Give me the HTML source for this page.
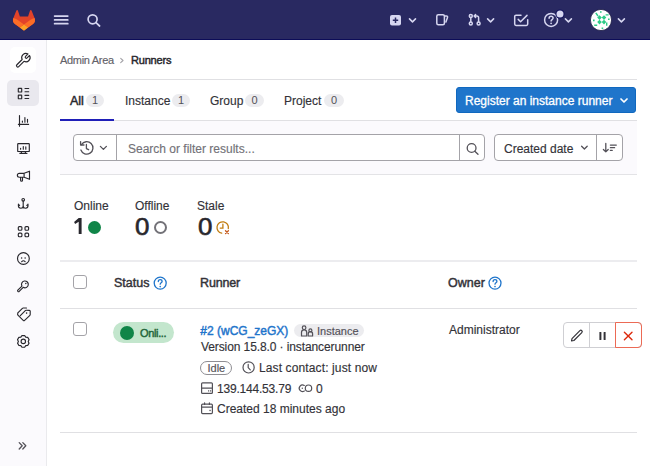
<!DOCTYPE html>
<html><head><meta charset="utf-8">
<style>
*{box-sizing:border-box;margin:0;padding:0}
html,body{width:650px;height:466px;overflow:hidden;background:#fff;font-family:"Liberation Sans",sans-serif;color:#333238}
.a{position:absolute}
.t{position:absolute;white-space:nowrap;font-size:12px;line-height:14px;-webkit-text-stroke:0.15px currentColor}
svg{display:block}
#hdr{left:0;top:0;width:650px;height:40px;background:#292961;border-bottom:1px solid #0c0c58}
#side{left:0;top:40px;width:47px;height:426px;background:#fbfafd;border-right:1px solid #eaeaed}
.sic{position:absolute;left:17px;width:13px;height:13px}
.line{position:absolute;height:1px;background:#e0e0e3}
.badge{position:absolute;height:13px;border-radius:7px;background:#ececef;color:#535158;font-size:11px;line-height:13px;text-align:center}
</style></head><body>

<!-- HEADER -->
<div id="hdr" class="a">
  <svg class="a" style="left:0;top:0" width="650" height="40" viewBox="0 0 650 40">
   <g transform="translate(13 10) scale(0.88 0.85)">
    <path fill="#E24329" d="m24.507 9.5-.034-.09L21.082.562a.896.896 0 0 0-1.694.091l-2.29 7.01H7.825L5.535.653a.898.898 0 0 0-1.694-.09L.451 9.411.416 9.5a6.297 6.297 0 0 0 2.09 7.278l.012.01.03.022 5.16 3.867 2.56 1.935 1.554 1.176a1.051 1.051 0 0 0 1.268 0l1.555-1.176 2.56-1.935 5.197-3.89.014-.01A6.297 6.297 0 0 0 24.507 9.5Z"/>
    <path fill="#FC6D26" d="m24.507 9.5-.034-.09a11.44 11.440 0 0 0-4.560 2.051l-7.447 5.632 4.742 3.584 5.197-3.890.014-.010A6.297 6.297 0 0 0 24.507 9.5Z"/>
    <path fill="#FCA326" d="m7.707 20.677 2.560 1.935 1.555 1.176a1.051 1.051 0 0 0 1.268 0l1.555-1.176 2.560-1.935-4.743-3.584-4.755 3.584Z"/>
    <path fill="#FC6D26" d="M5.010 11.461a11.430 11.430 0 0 0-4.560-2.050L.416 9.500a6.297 6.297 0 0 0 2.090 7.278l.012.010.030.022 5.160 3.867 4.745-3.584-7.444-5.632Z"/>
   </g>
   <g fill="none" stroke="#d6d6f0" stroke-width="1.5" stroke-linecap="round" stroke-linejoin="round">
    <!-- hamburger -->
    <path d="M54.6 16.1h13.2M54.6 19.9h13.2M54.6 23.7h13.2" stroke-width="1.7"/>
    <!-- search -->
    <circle cx="92.6" cy="19.3" r="4.5" stroke-width="1.7"/>
    <path d="M96 22.7l3.6 3.3" stroke-width="1.7"/>
    <!-- chevrons -->
    <path d="M409.5 18.9l3 3 3-3M487.6 18.9l3 3 3-3M565.4 18.9l3 3 3-3M618.4 18.9l3 3 3-3"/>
    <!-- mug -->
    <rect x="436.8" y="14.8" width="7.6" height="9.9" rx="1.5"/>
    <path d="M444.6 16h1.9c.8 0 1.3.7 1 1.4l-1.6 4.6"/>
    <!-- MR -->
    <circle cx="470.8" cy="15.9" r="1.5"/>
    <circle cx="470.8" cy="23.6" r="1.5"/>
    <circle cx="478.6" cy="23.6" r="1.5"/>
    <path d="M470.8 17.4v4.7M478.6 22.1v-4.3c0-1-.7-1.8-1.7-1.8h-2.6M475.6 14.5l-1.5 1.5 1.5 1.5"/>
    <!-- todo -->
    <path d="M521 15.2h-5a1.3 1.3 0 0 0-1.3 1.3v7.6a1.3 1.3 0 0 0 1.3 1.3h10.4a1.3 1.3 0 0 0 1.3-1.3v-4.4"/>
    <path d="M518.2 19.4l2.4 2.4 6.4-6.4"/>
    <!-- help -->
    <circle cx="551.1" cy="19.9" r="6.5"/>
    <path d="M549.1 18.2c0-1.1.9-2 2-2s2 .9 2 1.9c0 1.4-2 1.6-2 2.9"/>
   </g>
   <g fill="#d6d6f0">
    <rect x="390" y="15" width="11" height="10.6" rx="2"/>
    <circle cx="551.1" cy="23.3" r=".9"/>
    <circle cx="560" cy="14" r="4.6" fill="#12125c"/>
    <circle cx="560" cy="14" r="3.5"/>
   </g>
   <path d="M395.5 17.6v5.4M392.8 20.3h5.4" stroke="#292961" stroke-width="1.5"/>
  </svg>
  <!-- avatar -->
  <svg class="a" style="left:590px;top:9px" width="22" height="22" viewBox="0 0 22 22">
    <circle cx="11" cy="11" r="10.6" fill="#fff" stroke="#1d1d45" stroke-width="0.8"/>
    <g fill="#2ecc87">
      <path d="M9.5 6.3l2.3 2.3-2.3 2.3-2.3-2.3zM14 6.3l2.3 2.3L14 10.9l-2.3-2.3zM9.5 10.8l2.3 2.3-2.3 2.3-2.3-2.3zM14 10.8l2.3 2.3-2.3 2.3-2.3-2.3z"/>
      <path d="M10 2.2h1.6v1.6H10zM5.2 4.2l1.2-.8 2.2 3.2-1.2.8zM15.6 5.2h3v1.4h-3zM3 10.6h1.6v1.6H3zM18 9.4h1.6v1.6H18zM4.2 15.6h3v1.4h-3zM16 13.6h1.4v3.2H16zM11.6 18.4h1.6v1.6h-1.6z"/>
    </g>
  </svg>
</div>

<!-- SIDEBAR -->
<div id="side" class="a">
  <div class="a" style="left:10px;top:7px;width:26px;height:26px;background:#fff;border-radius:5px"></div>
  <div class="a" style="left:7px;top:40px;width:32px;height:26px;background:#e9e8ee;border-radius:5px"></div>
</div>

<!-- BREADCRUMB -->
<div class="t" style="left:60px;top:54px;font-size:11px;line-height:13px;color:#626168;letter-spacing:-0.3px">Admin Area</div>
<svg class="a" style="left:120px;top:57px" width="5" height="7" viewBox="0 0 5 7"><path d="M0.7 1.3l2.3 2.2-2.3 2.2" fill="none" stroke="#a4a3a8" stroke-width="1.1" stroke-linecap="round" stroke-linejoin="round"/></svg>
<div class="t" style="left:131px;top:54px;font-size:11px;line-height:13px;color:#28272d;letter-spacing:-0.2px;-webkit-text-stroke:0.45px #28272d">Runners</div>
<div class="line" style="left:60px;top:79px;width:577px"></div>

<!-- TABS -->
<div class="t" style="left:70px;top:93.6px;font-size:12.5px;color:#28272d;-webkit-text-stroke:0.45px #28272d">All</div>
<div class="badge" style="left:86px;top:94px;width:18px">1</div>
<div class="t" style="left:125px;top:94px">Instance</div>
<div class="badge" style="left:172px;top:94px;width:18px">1</div>
<div class="t" style="left:210px;top:94px">Group</div>
<div class="badge" style="left:245px;top:94px;width:19px">0</div>
<div class="t" style="left:284px;top:94px">Project</div>
<div class="badge" style="left:324px;top:94px;width:20px">0</div>
<div class="line" style="left:60px;top:120px;width:577px"></div>
<div class="a" style="left:60px;top:119px;width:54px;height:2px;background:#1f1fb8"></div>

<!-- Register button -->
<div class="a" style="left:456px;top:87px;width:180px;height:26px;background:#1f75cb;border:1px solid #1068bf;border-radius:3px"></div>
<div class="t" style="left:465px;top:94px;color:#fff;-webkit-text-stroke:0.3px #fff">Register an instance runner</div>
<svg class="a" style="left:620px;top:98px" width="8" height="5" viewBox="0 0 8 5"><path d="M1 1l3 3 3-3" fill="none" stroke="#fff" stroke-width="1.7" stroke-linecap="round" stroke-linejoin="round"/></svg>

<!-- FILTER BAR -->
<div class="a" style="left:60px;top:121px;width:577px;height:54px;background:#fbfafd;border-bottom:1px solid #e3e3e6"></div>
<div class="a" style="left:73px;top:134px;width:412px;height:27px;background:#fff;border:1px solid #a4a3a8;border-radius:4px"></div>
<div class="a" style="left:116px;top:134px;width:1px;height:27px;background:#a4a3a8"></div>
<div class="a" style="left:459px;top:134px;width:1px;height:27px;background:#a4a3a8"></div>
<div class="t" style="left:128px;top:142px;color:#737278">Search or filter results...</div>
<div class="a" style="left:494px;top:134px;width:129px;height:27px;background:#fff;border:1px solid #a4a3a8;border-radius:4px"></div>
<div class="a" style="left:596px;top:134px;width:1px;height:27px;background:#a4a3a8"></div>
<div class="t" style="left:504px;top:142px">Created date</div>

<!-- STATS -->
<div class="t" style="left:74px;top:199px">Online</div>
<div class="t" style="left:135px;top:199px">Offline</div>
<div class="t" style="left:197px;top:199px">Stale</div>
<svg class="a" style="left:70px;top:214px" width="16" height="24" viewBox="70 214 16 24"><path d="M78.7 218.1h2.9v15.9h-2.9v-12.3l-3.6 2.4-1-2.1z" fill="#28272d"/></svg>
<div class="t" style="left:134.7px;top:213px;font-size:24px;line-height:27px;-webkit-text-stroke:0.6px #28272d;color:#28272d;transform:scaleX(1.08);transform-origin:0 0">0</div>
<div class="t" style="left:197.7px;top:213px;font-size:24px;line-height:27px;-webkit-text-stroke:0.6px #28272d;color:#28272d;transform:scaleX(1.08);transform-origin:0 0">0</div>
<div class="a" style="left:88px;top:221px;width:13px;height:13px;border-radius:50%;background:#108548"></div>
<div class="a" style="left:154px;top:221px;width:13px;height:13px;border-radius:50%;border:2px solid #737278"></div>

<!-- TABLE -->
<div class="line" style="left:60px;top:260px;width:577px;height:2px;background:#ececef"></div>
<div class="a" style="left:73px;top:275px;width:14px;height:14px;border:1px solid #a4a3a8;border-radius:3px;background:#fff"></div>
<div class="t" style="left:114px;top:275.5px;font-size:12.5px;-webkit-text-stroke:0.45px #333238">Status</div>
<div class="t" style="left:200px;top:275.5px;font-size:12.5px;letter-spacing:-0.15px;-webkit-text-stroke:0.45px #333238">Runner</div>
<div class="t" style="left:448px;top:275.5px;font-size:12.5px;-webkit-text-stroke:0.45px #333238">Owner</div>
<div class="line" style="left:60px;top:308px;width:577px"></div>

<div class="a" style="left:73px;top:322px;width:14px;height:14px;border:1px solid #a4a3a8;border-radius:3px;background:#fff"></div>
<div class="a" style="left:113px;top:322px;width:61px;height:21px;border-radius:11px;background:#c3e6cd"></div>
<div class="a" style="left:120px;top:326px;width:14px;height:14px;border-radius:50%;background:#108548"></div>
<div class="t" style="left:140px;top:326.5px;font-size:11px;line-height:13px;color:#24663b;letter-spacing:-0.35px;-webkit-text-stroke:0.45px #24663b">Onli...</div>

<div class="t" style="left:200.3px;top:324px;color:#1f75cb;-webkit-text-stroke:0.45px #1f75cb">#2 (wCG_zeGX)</div>
<div class="badge" style="left:294px;top:324px;width:70px"></div>
<div class="t" style="left:317px;top:325px;font-size:11px;line-height:13px;color:#535158">Instance</div>
<div class="t" style="left:201px;top:340px;letter-spacing:-0.1px">Version 15.8.0 · instancerunner</div>
<div class="a" style="left:200px;top:361px;width:32px;height:14px;border:1px solid #8f8e93;border-radius:7px"></div>
<div class="t" style="left:207.5px;top:361.8px;font-size:11px;line-height:13px;color:#535158">Idle</div>
<div class="t" style="left:259px;top:361px;letter-spacing:0.12px">Last contact: just now</div>
<div class="t" style="left:217px;top:382px;letter-spacing:-0.2px">139.144.53.79</div>
<div class="t" style="left:316px;top:382px">0</div>
<div class="t" style="left:217px;top:402px">Created 18 minutes ago</div>

<div class="t" style="left:449px;top:323px">Administrator</div>
<div class="a" style="left:563px;top:322px;width:79px;height:26px;border:1px solid #cfcfd3;border-radius:4px;background:#fff"></div>
<div class="a" style="left:589px;top:322px;width:1px;height:26px;background:#cfcfd3"></div>
<div class="a" style="left:615px;top:322px;width:27px;height:26px;border:1px solid #ec6a55;border-radius:0 4px 4px 0"></div>

<div class="line" style="left:60px;top:432px;width:577px"></div>

<svg class="a" style="left:0;top:0" width="650" height="466" viewBox="0 0 650 466">
 <g fill="none" stroke="#28272d" stroke-width="1.15" stroke-linecap="round" stroke-linejoin="round">
  <!-- wrench -->
  <path d="M27.99 53.96A4.2 4.2 0 0 0 22.16 59.51L16.88 64.78A1.3 1.3 0 0 0 18.72 66.62L23.99 61.34A4.2 4.2 0 0 0 29.54 55.51L27.1 57.96A1.1 1.1 0 0 1 25.54 56.4Z"/>
  <!-- list -->
  <rect x="18.3" y="88.4" width="3.4" height="3.6" rx=".3"/>
  <rect x="18.3" y="95.1" width="3.4" height="3.6" rx=".3"/>
  <path d="M25 88.5h3.7M25 91.7h3.7M25 95.4h3.7M25 98.5h3.7"/>
  <!-- analytics -->
  <path d="M19.5 115.6v10.6M18.4 124.4h10.2M22.4 121.1v1.1M24.9 117.6v4.6M27.5 119.3v2.9"/>
  <!-- monitor -->
  <rect x="17.7" y="143.6" width="11.6" height="7.9" rx=".6"/>
  <path d="M19.8 153.3h7.2M21.4 151.5v1.8M25.4 151.5v1.8M20.6 148.3v.9M23.3 146.6v2.6M25.8 146.9v2.3"/>
  <!-- megaphone -->
  <path d="M24.1 173.3l5.4-2.1v8.1l-5.4-2.1zM24.1 173.3h-4.8a1.95 1.95 0 0 0 0 3.9h4.8M20.6 177.3v3a.95.95 0 0 0 1.9 0v-2.8"/>
  <!-- anchor -->
  <circle cx="23.2" cy="199.8" r="1.3"/>
  <path d="M23.2 201.1v6.9M18.4 204.1v1.7q0 2.4 2.4 2.4t2.4-2.2q0 2.2 2.4 2.2t2.4-2.4v-1.7M18.4 204.3l1.2 1.1M28 204.3l-1.2 1.1"/>
  <!-- grid -->
  <rect x="18.3" y="226.6" width="3.6" height="3.6" rx="1"/>
  <rect x="25" y="226.6" width="3.6" height="3.6" rx="1"/>
  <rect x="18.3" y="233.1" width="3.6" height="3.6" rx="1"/>
  <rect x="25" y="233.1" width="3.6" height="3.6" rx="1"/>
  <!-- face -->
  <circle cx="23.4" cy="258.5" r="5.9"/>
  <path d="M21.7 261.7q1.7-1.9 3.4 0"/>
  <!-- key -->
  <path d="M21.96 286.1A3.4 3.4 0 1 1 23.2 287.34L19.17 291.47A.95 .95 0 0 1 17.83 290.13Z"/>
  <!-- tag -->
  <path d="M17.6 313.2l4.8-4.9a1 1 0 0 1 .7-.3h3.4M20.3 315.6l5-5a1 1 0 0 1 .7-.3h3.4a.8.8 0 0 1 .8.8v3.5a1 1 0 0 1-.3.7l-5.3 5.1a1 1 0 0 1-1.4 0l-5.3-5.2a1 1 0 0 1 0-1.4"/>
  <!-- gear -->
  <path d="M21.95 335.55 L24.65 335.55 L25.75 337.16 L27.69 337.31 L29.04 339.65 L28.20 341.40 L29.04 343.15 L27.69 345.49 L25.75 345.64 L24.65 347.25 L21.95 347.25 L20.85 345.64 L18.91 345.49 L17.56 343.15 L18.40 341.40 L17.56 339.65 L18.91 337.31 L20.85 337.16Z"/>
  <circle cx="23.3" cy="341.4" r="2.2"/>
 </g>
 <g fill="#28272d">
  <circle cx="21.6" cy="258" r=".75"/><circle cx="25.1" cy="258" r=".75"/>
  <circle cx="25.8" cy="283.5" r=".75"/>
  <circle cx="26.6" cy="313.1" r=".8"/>
 </g>
 <!-- expand >> -->
 <path d="M19.2 442.6l3 3.2-3 3.2M22.8 442.6l3 3.2-3 3.2" fill="none" stroke="#535158" stroke-width="1.3" stroke-linecap="round" stroke-linejoin="round"/>

 <!-- history -->
 <g fill="none" stroke="#535158" stroke-width="1.3" stroke-linecap="round" stroke-linejoin="round">
  <path d="M81.5 144.6a6.2 6.2 0 1 1-.6 5.4"/>
  <path d="M80.6 141.6v3.4h3.4"/>
  <path d="M86.4 144.5v4.1l2.2 1.1"/>
  <path d="M100.4 146.4l3 3 3-3"/>
  <!-- search mag -->
  <circle cx="471.6" cy="148" r="4.4"/>
  <path d="M474.8 151.2l3.2 3.1"/>
  <!-- created date chevron -->
  <path d="M581.6 146.2l2.8 2.8 2.8-2.8"/>
  <!-- sort -->
  <path d="M605.8 143.4v8.4M603.4 149.5l2.4 2.4 2.4-2.4M610.4 145.1h5.9M610.4 147.7h4.2M610.4 150.4h1.8"/>
 </g>

 <!-- stale icon -->
 <g fill="none" stroke="#c17d10" stroke-width="1.3" stroke-linecap="round">
  <path d="M228.31 228.49A5.7 5.7 0 1 0 221.71 233.11"/>
  <path d="M222.9 224.2v3.9h-2.7"/>
 </g>
 <path d="M225.5 230.7l2.9 2.9M228.4 230.7l-2.9 2.9" stroke="#c4581b" stroke-width="1.3" stroke-linecap="round"/>

 <!-- help icons (blue) -->
 <g fill="none" stroke="#1f75cb" stroke-width="1.3" stroke-linecap="round">
  <circle cx="160.2" cy="283.1" r="6"/>
  <path d="M158.3 281.6c0-1.1.8-1.9 1.9-1.9s1.9.8 1.9 1.8c0 1.3-1.9 1.4-1.9 2.7"/>
  <circle cx="495" cy="283.1" r="6"/>
  <path d="M493.1 281.6c0-1.1.8-1.9 1.9-1.9s1.9.8 1.9 1.8c0 1.3-1.9 1.4-1.9 2.7"/>
 </g>
 <circle cx="160.2" cy="286.6" r=".8" fill="#1f75cb"/>
 <circle cx="495" cy="286.6" r=".8" fill="#1f75cb"/>

 <!-- meta icons -->
 <g fill="none" stroke="#535158" stroke-width="1.2" stroke-linecap="round" stroke-linejoin="round">
  <!-- users -->
  <circle cx="304.1" cy="327.7" r="1.8"/>
  <path d="M301.5 336v-3.6a2.6 2.6 0 0 1 5.2 0v3.6z"/>
  <circle cx="310.4" cy="330.4" r="1.5"/>
  <path d="M308.2 336v-2.1a2.2 2.2 0 0 1 4.4 0v2.1z"/>
  <!-- clock -->
  <circle cx="248.6" cy="367.4" r="5.6"/>
  <path d="M248.2 364.4v3.3l2.1 2.1"/>
  <!-- server -->
  <rect x="201.6" y="382.8" width="10.8" height="10.6" rx="1"/>
  <path d="M201.8 388.2h10.4"/>
  <!-- job link -->
  <path d="M304.3 385.4a3.3 3.3 0 1 0 0 5.6"/>
  <circle cx="308.5" cy="388.2" r="3.2"/>
  <!-- calendar -->
  <rect x="201.6" y="404.2" width="10.8" height="9.4" rx="1"/>
  <path d="M201.8 407.2h10.4M204.6 402.9v1.6M209.4 402.9v1.6"/>
 </g>
 <g fill="#535158">
  <circle cx="302.3" cy="388.2" r=".7"/>
  <rect x="208" y="390.3" width="1.2" height="1.2"/><rect x="210" y="390.3" width="1.2" height="1.2"/>
  <rect x="209.4" y="409.8" width="1.3" height="1.3"/>
 </g>

 <!-- action icons -->
 <path d="M572 338.6l7.9-7.9a1.3 1.3 0 0 1 1.9 1.9l-7.9 7.9-2.4.5z" fill="none" stroke="#333238" stroke-width="1.2" stroke-linejoin="round"/>
 <rect x="599.4" y="332" width="2" height="7.9" rx=".5" fill="#333238"/>
 <rect x="603.6" y="332" width="2" height="7.9" rx=".5" fill="#333238"/>
 <path d="M624.4 332.2l7.6 7.6M632 332.2l-7.6 7.6" stroke="#dd2b0e" stroke-width="1.4" stroke-linecap="round"/>
</svg>

</body></html>
